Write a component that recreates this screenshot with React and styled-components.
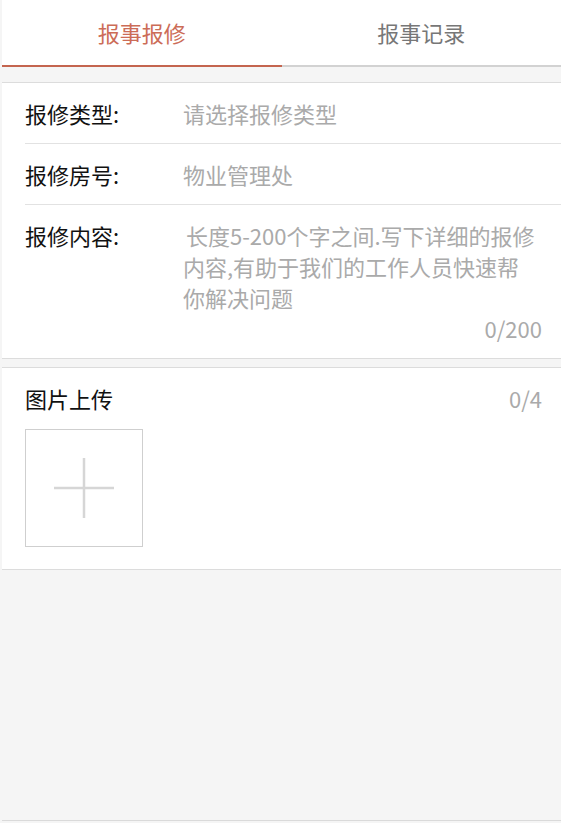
import React, { useState } from "react";
import styled, { createGlobalStyle } from "styled-components";

const GlobalStyle = createGlobalStyle`
  html, body {
    margin: 0;
    padding: 0;
    background: #f5f5f5;
    font-family: "Noto Sans CJK SC", "Noto Sans", sans-serif;
  }
  * { box-sizing: border-box; }
`;

const Page = styled.div`
  min-height: 100vh;
  display: flex;
  flex-direction: column;
  padding-left: 2px;
  background: #f5f5f5;
`;

const Tabs = styled.div`
  display: flex;
  background: #fff;
`;

const Tab = styled.div`
  flex: 1;
  height: 67px;
  display: flex;
  align-items: center;
  justify-content: center;
  font-size: 22px;
  padding-bottom: 2px;
  color: ${(p) => (p.active ? "#cc6c57" : "#777")};
  border-bottom: 2px solid ${(p) => (p.active ? "#c4654f" : "#d2d2d2")};
  cursor: pointer;
`;

const Section = styled.section`
  background: #fff;
  border-top: 1px solid #dcdcdc;
  border-bottom: 1px solid #dcdcdc;
  margin-top: ${(p) => p.gap || 8}px;
  padding-left: 23px;
`;

const Row = styled.div`
  display: flex;
  align-items: ${(p) => (p.top ? "flex-start" : "center")};
  min-height: ${(p) => (p.top ? "auto" : "61px")};
  padding: ${(p) => (p.top ? "15px 0 14px" : "0")};
  border-bottom: ${(p) => (p.last ? "none" : "1px solid #e2e2e2")};
  line-height: 31px;
`;

const Label = styled.div`
  width: 158px;
  flex-shrink: 0;
  font-size: 22px;
  color: #111;
`;

const Placeholder = styled.div`
  font-size: 22px;
  color: #aaa;
`;

const TextBlock = styled.div`
  flex: 1;
  padding-right: 19px;
  display: flex;
  flex-direction: column;
`;

const Hint = styled.div`
  font-size: 22px;
  color: #aaa;
  text-indent: 3px;
  padding-right: 4px;
`;

const Count = styled.div`
  text-align: right;
  font-size: 22px;
  color: #aaa;
`;

const UploadHead = styled.div`
  display: flex;
  justify-content: space-between;
  align-items: center;
  padding: 15px 19px 0 0;
  line-height: 31px;
`;

const UploadTitle = styled.div`
  font-size: 22px;
  color: #111;
`;

const UploadBody = styled.div`
  display: flex;
  gap: 12px;
  padding: 15px 0 22px;
`;

const AddBox = styled.div`
  width: 118px;
  height: 118px;
  border: 1px solid #cfcfcf;
  display: flex;
  align-items: center;
  justify-content: center;
  cursor: pointer;
`;

const Filler = styled.div`
  flex: 1;
  border-bottom: 1px solid #dadada;
  margin-bottom: 2px;
`;

const App = () => {
  const [tab, setTab] = useState(0);

  return (
    <Page>
      <GlobalStyle />
      <Tabs>
        <Tab active={tab === 0} onClick={() => setTab(0)}>
          报事报修
        </Tab>
        <Tab active={tab === 1} onClick={() => setTab(1)}>
          报事记录
        </Tab>
      </Tabs>

      <Section gap={15}>
        <Row>
          <Label>报修类型:</Label>
          <Placeholder>请选择报修类型</Placeholder>
        </Row>
        <Row>
          <Label>报修房号:</Label>
          <Placeholder>物业管理处</Placeholder>
        </Row>
        <Row top last>
          <Label>报修内容:</Label>
          <TextBlock>
            <Hint>
              长度5-200个字之间.写下详细的报修内容,有助于我们的工作人员快速帮你解决问题
            </Hint>
            <Count>0/200</Count>
          </TextBlock>
        </Row>
      </Section>

      <Section gap={8}>
        <UploadHead>
          <UploadTitle>图片上传</UploadTitle>
          <Count>0/4</Count>
        </UploadHead>
        <UploadBody>
          <AddBox>
            <svg width="60" height="60" viewBox="0 0 60 60">
              <path d="M30 0v60M0 30h60" stroke="#d6d6d6" strokeWidth="2.5" />
            </svg>
          </AddBox>
        </UploadBody>
      </Section>

      <Filler />
    </Page>
  );
};

export default App;
